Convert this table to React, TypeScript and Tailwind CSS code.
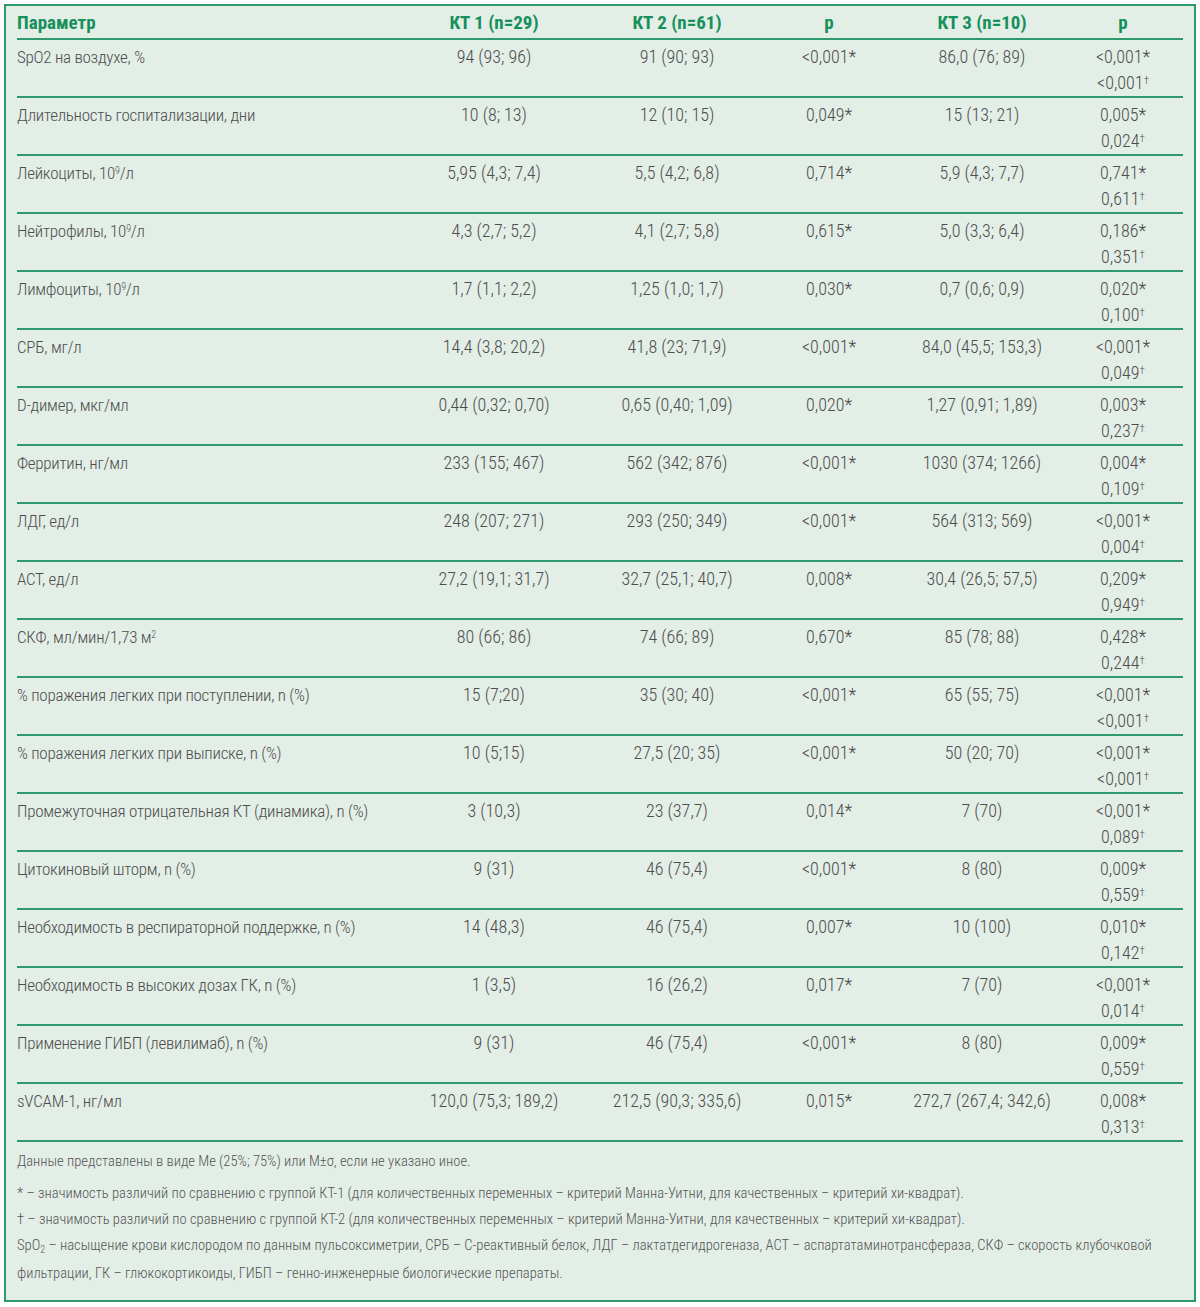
const rows: [React.ReactNode, string, string, string, string, string, string][] = [
  ['SpO2 на воздухе, %', '94 (93; 96)', '91 (90; 93)', '<0,001*', '86,0 (76; 89)', '<0,001*', '<0,001'],
  ['Длительность госпитализации, дни', '10 (8; 13)', '12 (10; 15)', '0,049*', '15 (13; 21)', '0,005*', '0,024'],
  [<>Лейкоциты, 10<sup className="text-[10px] leading-none">9</sup>/л</>, '5,95 (4,3; 7,4)', '5,5 (4,2; 6,8)', '0,714*', '5,9 (4,3; 7,7)', '0,741*', '0,611'],
  [<>Нейтрофилы, 10<sup className="text-[10px] leading-none">9</sup>/л</>, '4,3 (2,7; 5,2)', '4,1 (2,7; 5,8)', '0,615*', '5,0 (3,3; 6,4)', '0,186*', '0,351'],
  [<>Лимфоциты, 10<sup className="text-[10px] leading-none">9</sup>/л</>, '1,7 (1,1; 2,2)', '1,25 (1,0; 1,7)', '0,030*', '0,7 (0,6; 0,9)', '0,020*', '0,100'],
  ['СРБ, мг/л', '14,4 (3,8; 20,2)', '41,8 (23; 71,9)', '<0,001*', '84,0 (45,5; 153,3)', '<0,001*', '0,049'],
  ['D-димер, мкг/мл', '0,44 (0,32; 0,70)', '0,65 (0,40; 1,09)', '0,020*', '1,27 (0,91; 1,89)', '0,003*', '0,237'],
  ['Ферритин, нг/мл', '233 (155; 467)', '562 (342; 876)', '<0,001*', '1030 (374; 1266)', '0,004*', '0,109'],
  ['ЛДГ, ед/л', '248 (207; 271)', '293 (250; 349)', '<0,001*', '564 (313; 569)', '<0,001*', '0,004'],
  ['АСТ, ед/л', '27,2 (19,1; 31,7)', '32,7 (25,1; 40,7)', '0,008*', '30,4 (26,5; 57,5)', '0,209*', '0,949'],
  [<>СКФ, мл/мин/1,73 м<sup className="text-[10px] leading-none">2</sup></>, '80 (66; 86)', '74 (66; 89)', '0,670*', '85 (78; 88)', '0,428*', '0,244'],
  ['% поражения легких при поступлении, n (%)', '15 (7;20)', '35 (30; 40)', '<0,001*', '65 (55; 75)', '<0,001*', '<0,001'],
  ['% поражения легких при выписке, n (%)', '10 (5;15)', '27,5 (20; 35)', '<0,001*', '50 (20; 70)', '<0,001*', '<0,001'],
  ['Промежуточная отрицательная КТ (динамика), n (%)', '3 (10,3)', '23 (37,7)', '0,014*', '7 (70)', '<0,001*', '0,089'],
  ['Цитокиновый шторм, n (%)', '9 (31)', '46 (75,4)', '<0,001*', '8 (80)', '0,009*', '0,559'],
  ['Необходимость в респираторной поддержке, n (%)', '14 (48,3)', '46 (75,4)', '0,007*', '10 (100)', '0,010*', '0,142'],
  ['Необходимость в высоких дозах ГК, n (%)', '1 (3,5)', '16 (26,2)', '0,017*', '7 (70)', '<0,001*', '0,014'],
  ['Применение ГИБП (левилимаб), n (%)', '9 (31)', '46 (75,4)', '<0,001*', '8 (80)', '0,009*', '0,559'],
  ['sVCAM-1, нг/мл', '120,0 (75,3; 189,2)', '212,5 (90,3; 335,6)', '0,015*', '272,7 (267,4; 342,6)', '0,008*', '0,313'],
]

const grid = 'grid grid-cols-[383px_188px_178px_126px_180px_102px]'

export default function App() {
  return (
    <div className="bg-white w-[1200px] h-[1307px] pt-[4px] px-[4px]" style={{ fontFamily: '"Roboto Condensed", Roboto, sans-serif' }}>
      <div className="border-2 border-[#2f9a6b] bg-[#e3eee7] pl-[11px] pr-[11px] h-[1298px]">
        <div className={`${grid} h-[34px] border-b-2 border-[#2f9a6b] text-[19px] font-bold text-[#17905c] items-end pb-[1px]`}>
          <div>Параметр</div>
          <div className="text-center">КТ 1 (n=29)</div>
          <div className="text-center">КТ 2 (n=61)</div>
          <div className="text-center">p</div>
          <div className="text-center">КТ 3 (n=10)</div>
          <div className="text-center">p</div>
        </div>
        {rows.map((r, i) => (
          <div key={i} className={`${grid} h-[58px] border-b-2 border-[#2f9a6b] text-[18px] leading-[26px] text-[#4d4d4d] font-light pt-[4px]`}>
            <div className="text-[17px] tracking-[-0.25px]">{r[0]}</div>
            <div className="text-center">{r[1]}</div>
            <div className="text-center">{r[2]}</div>
            <div className="text-center">{r[3]}</div>
            <div className="text-center">{r[4]}</div>
            <div className="text-center">
              <div>{r[5]}</div>
              <div>{r[6]}<sup className="text-[11px] leading-none">†</sup></div>
            </div>
          </div>
        ))}
        <div className="pt-[6px] text-[14.6px] leading-[26px] text-[#555] font-light">
          <p className="mb-[6px]">Данные представлены в виде Me (25%; 75%) или M±σ, если не указано иное.</p>
          <p>* – значимость различий по сравнению с группой КТ-1 (для количественных переменных – критерий Манна-Уитни, для качественных – критерий хи-квадрат).</p>
          <p>† – значимость различий по сравнению с группой КТ-2 (для количественных переменных – критерий Манна-Уитни, для качественных – критерий хи-квадрат).</p>
          <p className="pr-[10px]">SpO<span className="text-[10px] relative top-[3px]">2</span> – насыщение крови кислородом по данным пульсоксиметрии, СРБ – С-реактивный белок, ЛДГ – лактатдегидрогеназа, АСТ – аспартатаминотрансфераза, СКФ – скорость клубочковой фильтрации, ГК – глюкокортикоиды, ГИБП – генно-инженерные биологические препараты.</p>
        </div>
      </div>
    </div>
  )
}
